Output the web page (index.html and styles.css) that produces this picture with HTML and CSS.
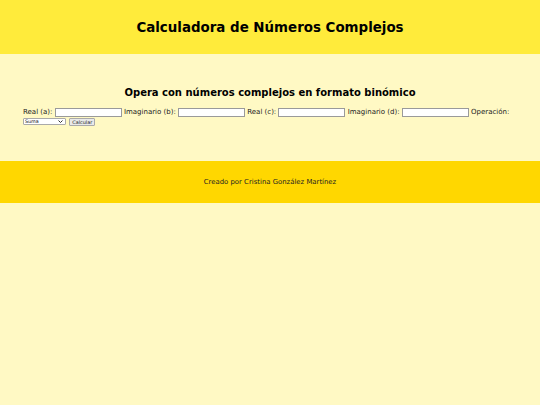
FILE: index.html
```html
<!DOCTYPE html>
<html lang="es">
<head>
<meta charset="utf-8">
<title>Calculadora de Números Complejos</title>
<link rel="stylesheet" href="styles.css">
</head>
<body>
<header class="site-header">
  <h1 class="site-title">Calculadora de Números Complejos</h1>
</header>
<main class="content">
  <h2 class="section-title">Opera con números complejos en formato binómico</h2>
  <form class="calc-form">
    <label>Real (a): <input type="text" class="field"></label>
    <label>Imaginario (b): <input type="text" class="field"></label>
    <label>Real (c): <input type="text" class="field"></label>
    <label>Imaginario (d): <input type="text" class="field"></label>
    <label>Operación: <span class="select-wrap"><select class="op">
      <option>Suma</option>
      <option>Resta</option>
      <option>Multiplicación</option>
      <option>División</option>
    </select><svg class="chev" width="5" height="3" viewBox="0 0 5 3"><path d="M0.5 0.5 L2.5 2.5 L4.5 0.5" fill="none" stroke="#333" stroke-width="1"/></svg></span></label>
    <button type="button" class="btn">Calcular</button>
  </form>
</main>
<footer class="site-footer">
  <p class="credit">Creado por Cristina González Martínez</p>
</footer>
</body>
</html>
```
FILE: styles.css
```css
html, body {
  margin: 0;
  padding: 0;
}
body {
  background: #fff9c4;
  font-family: "DejaVu Sans", Verdana, sans-serif;
  color: #000;
  min-height: 405px;
}
.site-header {
  background: #ffeb3b;
  height: 54px;
  display: flex;
  align-items: center;
  justify-content: center;
}
.site-title {
  margin: 0;
  font-size: 13.4px;
  font-weight: bold;
}
.content {
  padding: 33px 23px 35px;
}
.section-title {
  margin: 0 0 10px;
  text-align: center;
  font-size: 10px;
  font-weight: bold;
}
.calc-form {
  font-size: 7px;
  line-height: 9px;
  color: #222;
}
.field {
  width: 67px;
  height: 9px;
  box-sizing: border-box;
  border: 1px solid #9a9a9a;
  padding: 0;
  font-size: 6px;
  vertical-align: middle;
  background: #fff;
}
.select-wrap {
  position: relative;
  display: inline-block;
  vertical-align: middle;
  line-height: 0;
}
.op {
  -webkit-appearance: none;
  appearance: none;
  width: 43px;
  height: 7px;
  font-family: "DejaVu Sans", Verdana, sans-serif;
  font-size: 4.8px;
  line-height: 5px;
  padding: 0 0 0 1px;
  margin: 0;
  border: 1px solid #aaa;
  border-radius: 1px;
  box-sizing: border-box;
  background: #fff;
  color: #111;
}
.chev {
  position: absolute;
  right: 3px;
  top: 2px;
  pointer-events: none;
}
.btn {
  height: 8px;
  font-family: "DejaVu Sans", Verdana, sans-serif;
  font-size: 4.9px;
  line-height: 6px;
  padding: 0 2px;
  margin-left: 1px;
  border: 1px solid #aaa;
  border-radius: 1px;
  background: #e9e9e9;
  color: #222;
  vertical-align: middle;
}
.site-footer {
  background: #ffd700;
  height: 42px;
  display: flex;
  align-items: center;
  justify-content: center;
}
.credit {
  margin: 0;
  font-size: 6.9px;
  color: #222;
}
```
